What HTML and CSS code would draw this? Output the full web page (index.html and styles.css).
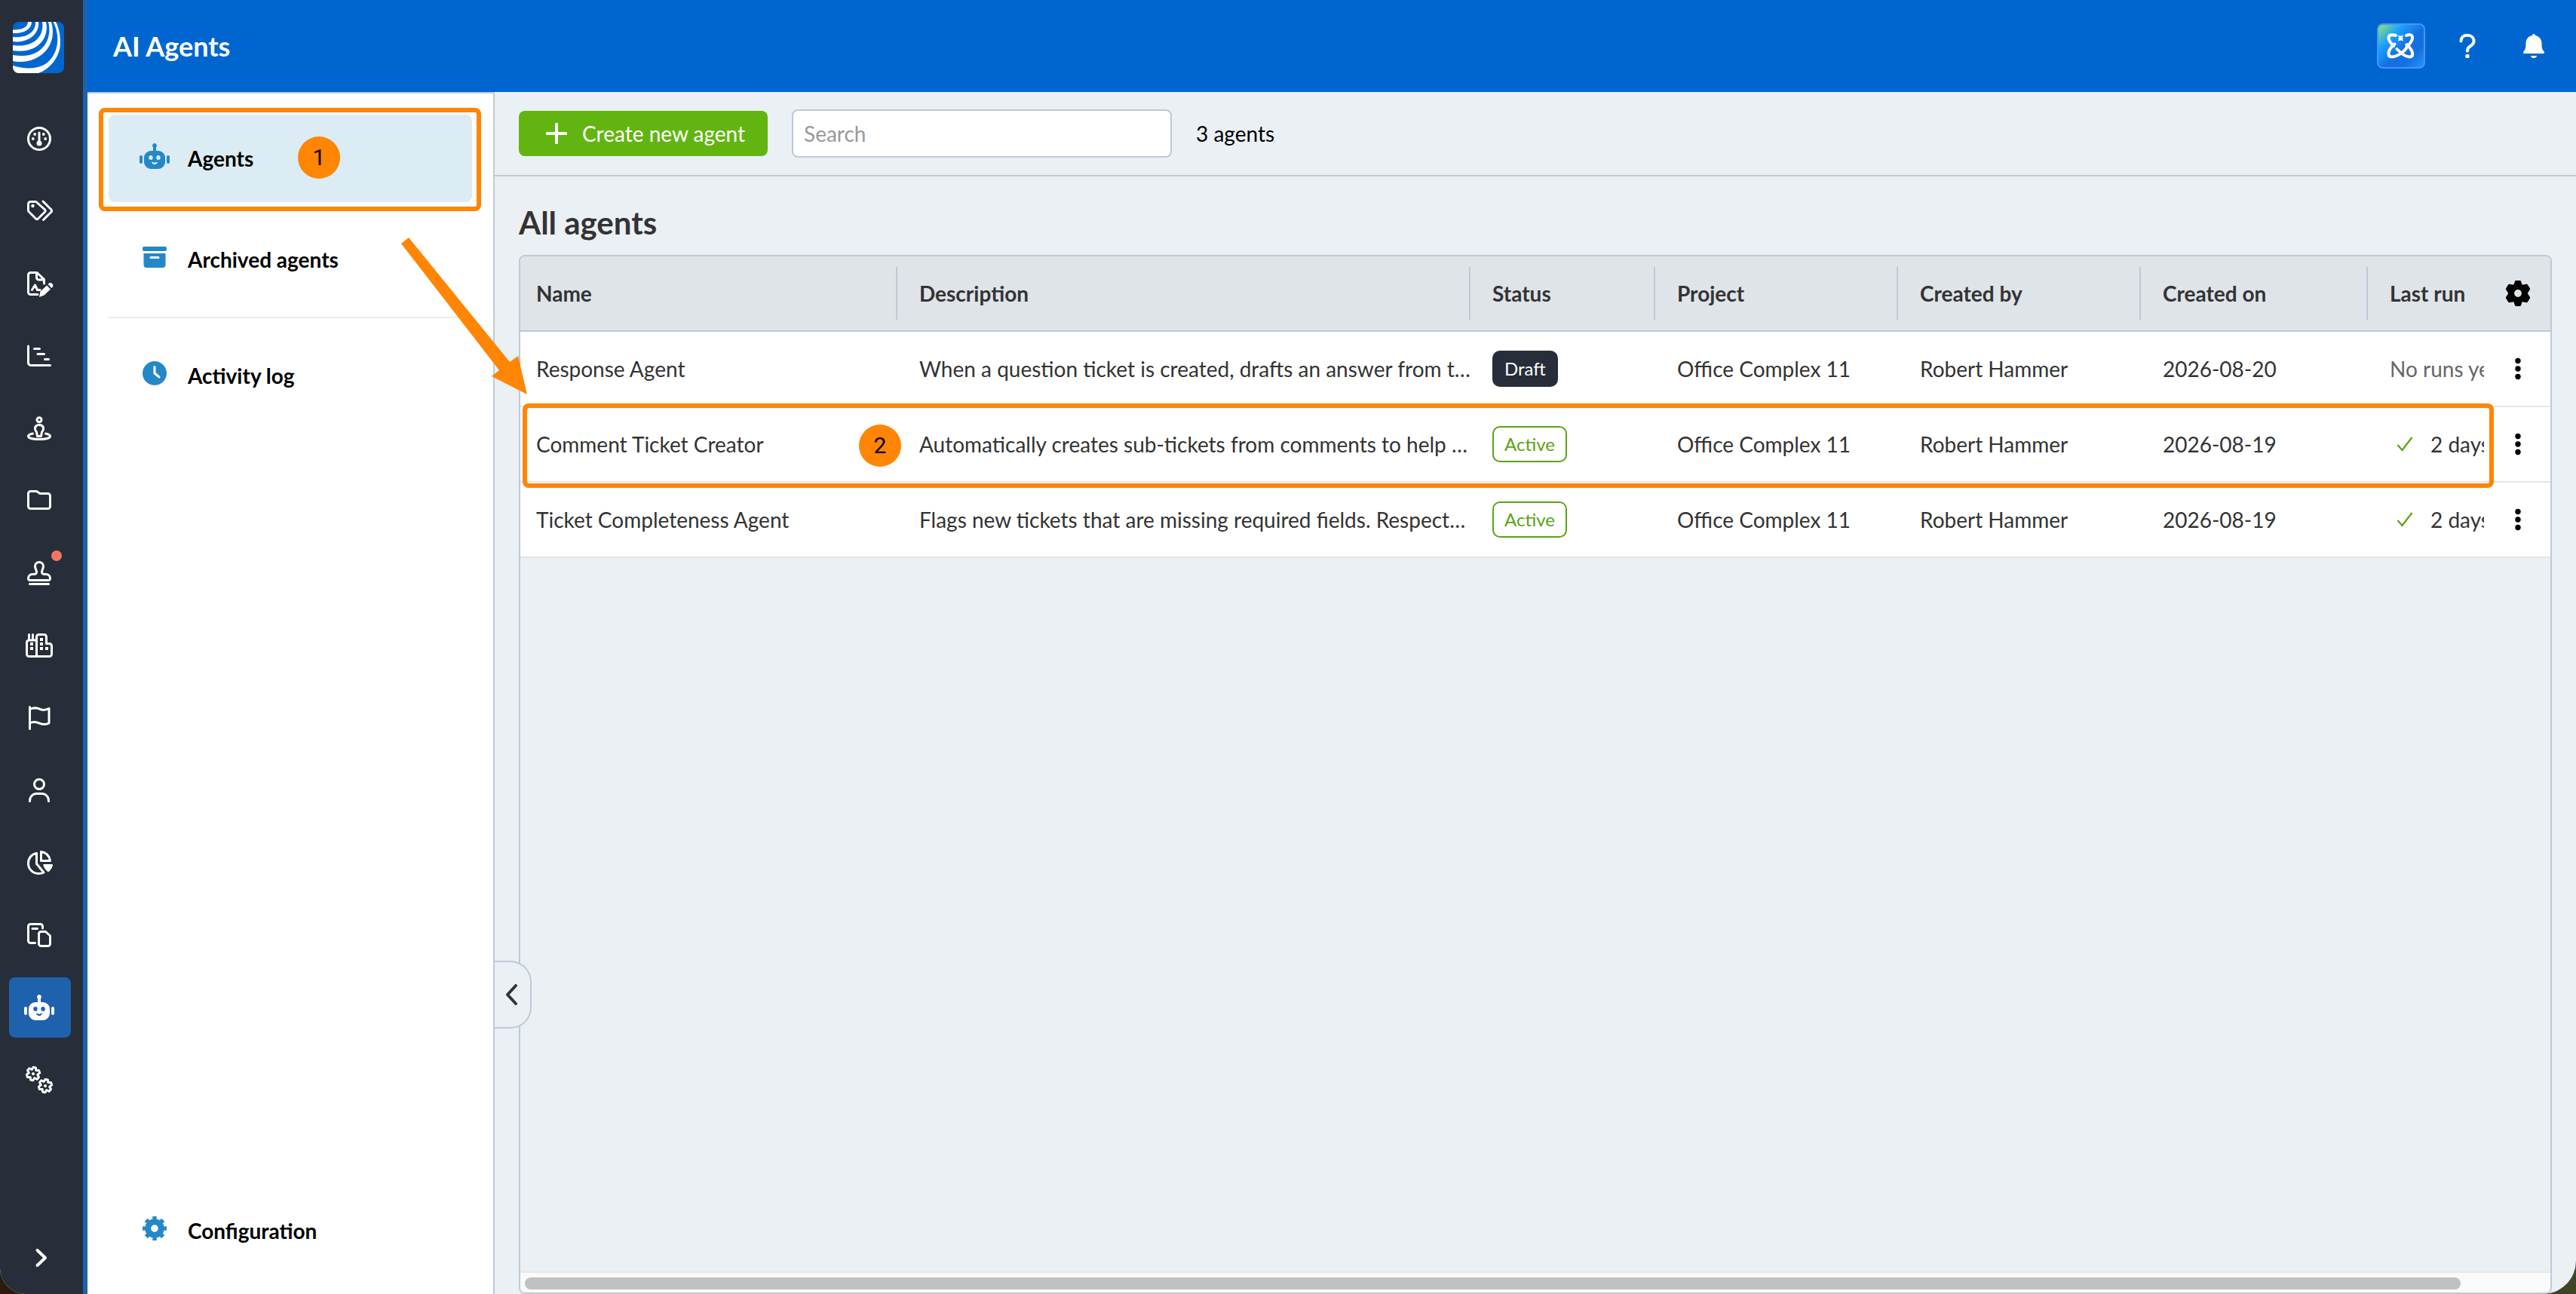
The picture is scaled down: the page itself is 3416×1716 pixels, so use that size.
FILE: index.html
```
<!DOCTYPE html>
<html lang="en">

<head>
    <meta charset="utf-8">
    <meta name="viewport" content="width=device-width, initial-scale=1.0">
    <title>AI Agents</title>

    <link rel="stylesheet" href="styles.css">
</head>

<body>
    <svg class="sprite" aria-hidden="true">
        <symbol id="robot" viewBox="0 0 48 48">
            <path fill="currentColor" fill-rule="evenodd" d="M24 7a3 3 0 0 1 2 5.200V17h3a9 9 0 0 1 9 9v6a9 9 0 0 1-9 9H19a9 9 0 0 1-9-9v-6a9 9 0 0 1 9-9h3v-4.800A3 3 0 0 1 24 7zM19 23a2.700 3 0 1 0 0 6 2.700 3 0 0 0 0-6zm10 0a2.700 3 0 1 0 0 6 2.700 3 0 0 0 0-6zm-8.500 8.500c-1 1.500 1 3.500 3.500 3.500s4.500-2 3.500-3.500c-2 1.500-5 1.500-7 0z" />
            <rect x="4" y="23" width="4" height="11" rx="2" fill="currentColor" />
            <rect x="40" y="23" width="4" height="11" rx="2" fill="currentColor" />
        </symbol>
        <symbol id="cog" viewBox="-8 -8 16 16" overflow="visible">
            <path d="M-1.700-8.500L1.700-8.500 2.800-5.200 6.500-6 8.300-2.900 5.800 0 8.300 2.900 6.500 6 2.800 5.200 1.700 8.500-1.700 8.500-2.800 5.200-6.500 6-8.300 2.900-5.800 0-8.300-2.900-6.500-6-2.800-5.200z" />
        </symbol>
        <symbol id="dots" viewBox="0 0 48 48">
            <circle cx="24" cy="13.500" r="3.700" />
            <circle cx="24" cy="24" r="3.700" />
            <circle cx="24" cy="34.500" r="3.700" />
        </symbol>
        <symbol id="check" viewBox="0 0 24 24">
            <path d="M2.500 13l6 7L21.500 3" fill="none" stroke="currentColor" stroke-width="2.200" />
        </symbol>
    </svg>

    <div class="app">
        <nav class="rail">
            <a href="#" class="logo" aria-label="Home">
                <svg viewBox="0 0 68 68">
                    <rect width="68" height="68" fill="#0066cf" />
                    <g fill="#fff">
                        <path d="M20 0C20 7 12 11 0 10.500V15C14 16 25 10 25 0z" />
                        <path d="M30 0C31 12 20 22 0 20V26C22 29 36 14 34 0z" />
                        <path d="M39 0C42 17 30 35 0 31V38C32 43 49 22 44 0z" />
                        <path d="M47 0C53 22 40 51 0 44V52C32 58 61 34 51 0z" />
                        <path d="M53.500 0C62 16 62 38 48 52 38 62 20 64 0 58V68H34C50 62 60 48 62.500 34 64 22 62 10 57 0z" />
                    </g>
                </svg>
            </a>

            <a href="#" aria-label="Dashboard">
                <svg viewBox="0 0 48 48"><circle cx="24" cy="24" r="14.500" /><path d="M24 16v12" /><g class="solid"><circle cx="24" cy="30" r="3.500" /><circle cx="15.800" cy="24" r="1.900" /><circle cx="32.200" cy="24" r="1.900" /><circle cx="18.200" cy="18" r="1.900" /><circle cx="29.800" cy="18" r="1.900" /></g></svg>
            </a>
            <a href="#" aria-label="Tickets">
                <svg viewBox="0 0 48 48"><path d="M12.500 11.500H19a3 3 0 0 1 2 1l10.500 9.500a2 2 0 0 1 0 3l-9 9a2 2 0 0 1-3 0l-9-9a3 3 0 0 1-1-2v-8.500a3 3 0 0 1 3-3z" /><path d="M29 11l11 11a2 2 0 0 1 0 3L29.500 35.500" /><circle class="solid" cx="15.400" cy="17" r="2.200" /></svg>
            </a>
            <a href="#" aria-label="Forms">
                <svg viewBox="0 0 48 48"><path d="M22 38.500h-9.500a3 3 0 0 1-3-3v-23a3 3 0 0 1 3-3H21l9.500 9V24M20.500 10v6a3 3 0 0 0 3 3h7M14.500 32.500l4-6.500 3 6.500H25" /><g class="solid"><path d="M24 42l1.500-7.500 8.500-8 5 5-8.500 8z" /><path d="M35.500 25l1.200-1.200a3.600 3.600 0 0 1 5 5L40.500 30z" /></g></svg>
            </a>
            <a href="#" aria-label="Schedule">
                <svg viewBox="0 0 48 48"><path d="M9.500 11v22a3.500 3.500 0 0 0 3.500 3.500h25.500M17.500 14.500h7M22 21.500h8.500M31.500 28.500h5" /></svg>
            </a>
            <a href="#" aria-label="Site view">
                <svg viewBox="0 0 48 48"><circle cx="24" cy="12.700" r="3" /><path d="M24 19.500c-3.500 0-5.500 2-5.500 5 0 2.500 1 3.500 2 4.500l1 5.500h5l1-5.500c1-1 2-2 2-4.500 0-3-2-5-5.500-5zM15.500 31C11 31.800 9.500 33 9.500 34.500 9.500 37 16 38.500 24 38.500S38.500 37 38.500 34.500C38.500 33 37 31.800 32.500 31" /></svg>
            </a>
            <a href="#" aria-label="Documents">
                <svg viewBox="0 0 48 48"><path d="M12.500 11.500h8l4.500 3h10.500a3 3 0 0 1 3 3v14a3 3 0 0 1-3 3h-23a3 3 0 0 1-3-3v-17a3 3 0 0 1 3-3z" /></svg>
            </a>
            <a href="#" aria-label="Approvals">
                <svg viewBox="0 0 48 48"><path d="M20.500 22.500c0-3-2-4-2-7.500a5.500 5.500 0 0 1 11 0c0 3.500-2 4.500-2 7.500 0 2 1.500 3 4 3H33a5.500 5.500 0 0 1 5.500 5.500c0 1.500-1 2.500-2.500 2.500H12c-1.500 0-2.500-1-2.500-2.500a5.500 5.500 0 0 1 5.500-5.500h1.500c2.500 0 4-1 4-3zM11.500 38.500h25" /></svg>
                <span class="alert"></span>
            </a>
            <a href="#" aria-label="Buildings">
                <svg viewBox="0 0 48 48"><path d="M20.500 17H10.500a3 3 0 0 0-3 3v15.500a3 3 0 0 0 3 3h27a3 3 0 0 0 3-3v-11a3 3 0 0 0-3-3h-4v-9a3 3 0 0 0-3-3h-7a3 3 0 0 0-3 3v26M10.500 17V9.500M15.500 17V9.500" /><g class="solid"><rect x="12" y="20" width="4" height="4" /><rect x="12" y="26" width="4" height="4" /><rect x="25" y="14" width="4" height="4" /><rect x="25" y="20" width="4" height="4" /><rect x="25" y="26" width="4" height="4" /><rect x="32" y="26" width="4" height="4" /></g></svg>
            </a>
            <a href="#" aria-label="Milestones">
                <svg viewBox="0 0 48 48"><path d="M11.500 9.500v29M11.500 12.500C17 10 21 10.500 25 12.300s8 1.300 12-.8V31c-4 2-8 2-12 .3S16 28.500 11.500 31" /></svg>
            </a>
            <a href="#" aria-label="People">
                <svg viewBox="0 0 48 48"><circle cx="24" cy="16" r="6.500" /><path d="M11.500 38.500c0-6.500 4.500-10 8.500-10h8c4 0 8.500 3.500 8.500 10" /></svg>
            </a>
            <a href="#" aria-label="Reports">
                <svg viewBox="0 0 48 48"><path d="M20.500 11.500V25.500L30 37C28 38 25.500 38.500 23 38.500 15.500 38.500 9.500 32.500 9.500 25 9.500 18 14 12.500 20.500 11.500zM26.500 9.500C33 10.500 37.500 15 38.500 21.500h-12z" /><path class="solid" d="M30 26h11c1 0 1 1 .8 2-.8 3-2.300 5.500-4.800 7.700-.7.600-1.300.600-2 0-2.500-2.200-4.500-4.700-5.500-7.700-.4-1 0-2 .500-2z" /></svg>
            </a>
            <a href="#" aria-label="Templates">
                <svg viewBox="0 0 48 48"><path d="M18.500 34.500h-6a3 3 0 0 1-3-3v-19a3 3 0 0 1 3-3h13a3 3 0 0 1 3 3V15M15 15.500h6.500M26.500 19.500h6l6 5.500v10.500a3 3 0 0 1-3 3h-9a3 3 0 0 1-3-3v-13a3 3 0 0 1 3-3z" /></svg>
            </a>
            <a href="#" class="current" aria-label="AI agents">
                <svg class="plain"><use href="#robot" /></svg>
            </a>
            <a href="#" aria-label="Settings">
                <svg viewBox="0 0 48 48"><g transform="translate(16 16) rotate(12)"><use href="#cog" x="-8" y="-8" width="16" height="16" /><circle class="solid" r="2" /></g><g transform="translate(32 32) rotate(12)"><use href="#cog" x="-8" y="-8" width="16" height="16" /><circle class="solid" r="2" /></g></svg>
            </a>

            <button class="expand" aria-label="Expand menu">
                <svg viewBox="0 0 24 32"><path d="M6.500 6L17 16 6.500 26" /></svg>
            </button>
        </nav>

        <div class="page">
            <header>
                <h1>AI Agents</h1>
                <div class="tools">
                    <button class="assistant" aria-label="Assistant">
                        <svg viewBox="0 0 48 48">
                            <path d="M17 10C12 8.500 7.500 9 7.500 13.500 7.500 17 11 21 14 24M15.500 21.500C10 26 7 31 7.500 35 8 40 15 38.500 19 36.500 24 34 28 31 31 27M18.500 28C23 33 30 38 35 38.500 40 38.500 40 34 38 30 36.500 27 34 24.500 32 22M31 10C36 8 39.500 9.500 39 14 38.500 17.500 36 20.500 33 24" />
                            <path class="solid" d="M20 9.500c2 1.200 5 1.200 7 0-1.200 2.500-1.200 5 0 8-2-1.500-5-1.500-7 0 1.200-3 1.200-5.500 0-8zM29 20.500c1.700 1.200 3.500 1.200 5.500 0-1 2-1 4 0 6-2-1.200-3.800-1.200-5.500 0 1-2 1-4 0-6z" />
                        </svg>
                    </button>
                    <button aria-label="Help">
                        <svg viewBox="0 0 48 48"><path d="M15.500 17.500c0-5 3.500-7.700 8.500-7.700s8.500 3.200 8.500 7.700c0 3.500-2 5-4.500 6.500s-4 3-4 6.500" /><circle class="solid" cx="24" cy="37.400" r="2.700" /></svg>
                    </button>
                    <button aria-label="Notifications">
                        <svg viewBox="0 0 48 48"><path class="solid" d="M24 8a2 2 0 0 1 2 2c5 1 8.500 5 8.500 10 0 6 .500 8.500 3.200 11.500 1 1.500 0 2.500-1.200 2.500h-25c-1.200 0-2.200-1-1.200-2.500C13 28.500 13.500 26 13.500 20c0-5 3.500-9 8.500-10a2 2 0 0 1 2-2zM20 37h8c0 4-8 4-8 0z" /></svg>
                    </button>
                </div>
            </header>

            <div class="body">
                <aside class="panel">
                    <a href="#" class="item chosen">
                        <svg><use href="#robot" /></svg>
                        <span>Agents</span>
                        <b class="step">1</b>
                    </a>
                    <a href="#" class="item">
                        <svg viewBox="0 0 48 48"><rect x="8" y="10" width="32" height="6" rx="2" fill="currentColor" /><path fill="currentColor" d="M9.500 19h29v15a4 4 0 0 1-4 4h-21a4 4 0 0 1-4-4z" /><path d="M19 24.500h10" stroke="#fff" stroke-width="3" stroke-linecap="round" /></svg>
                        <span>Archived agents</span>
                    </a>
                    <hr>
                    <a href="#" class="item">
                        <svg viewBox="0 0 48 48"><circle cx="24" cy="24" r="16" fill="currentColor" /><path d="M24 15.500V24l6 5" fill="none" stroke="#fff" stroke-width="3" stroke-linecap="round" /></svg>
                        <span>Activity log</span>
                    </a>
                    <a href="#" class="item bottom">
                        <svg viewBox="0 0 48 48" fill="none" stroke="currentColor"><circle cx="24" cy="24" r="8.800" stroke-width="8" /><circle cx="24" cy="24" r="13.500" stroke-width="5" pathLength="16" stroke-dasharray="1 1" stroke-dashoffset=".5" /></svg>
                        <span>Configuration</span>
                    </a>
                </aside>

                <main>
                    <div class="toolbar">
                        <button class="create">
                            <svg viewBox="0 0 28 28"><path d="M14 1.500v25M1.500 14h25" /></svg>
                            Create new agent
                        </button>
                        <input type="search" placeholder="Search" aria-label="Search agents">
                        <span>3 agents</span>
                    </div>

                    <h2>All agents</h2>

                    <div class="grid">
                        <table>
                            <colgroup>
                                <col class="c-name">
                                <col>
                                <col class="c-status">
                                <col class="c-who">
                                <col class="c-who">
                                <col class="c-date">
                                <col class="c-run">
                                <col class="c-menu">
                            </colgroup>
                            <thead>
                                <tr>
                                    <th>Name</th>
                                    <th>Description</th>
                                    <th>Status</th>
                                    <th>Project</th>
                                    <th>Created by</th>
                                    <th>Created on</th>
                                    <th>Last run</th>
                                    <th>
                                        <button class="more" aria-label="Table settings"><svg viewBox="-24 -24 48 48"><g transform="scale(2)"><path fill-rule="evenodd" stroke="#000" stroke-width="1.500" stroke-linejoin="round" d="M-1.300-7.700H1.300L2.300-4.800 5.800-5.400 7.300-2.900 5.500 0 7.300 2.900 5.800 5.400 2.300 4.800 1.300 7.700H-1.300L-2.300 4.800-5.800 5.400-7.300 2.900-5.500 0-7.300-2.900-5.800-5.400-2.300-4.800zM0-3.200A3.200 3.200 0 0 0 0 3.200 3.200 3.200 0 0 0 0-3.200z" /></g></svg></button>
                                    </th>
                                </tr>
                            </thead>
                            <tbody>
                                <tr>
                                    <td>Response Agent</td>
                                    <td>When a question ticket is created, drafts an answer from the docs</td>
                                    <td><span class="badge draft">Draft</span></td>
                                    <td>Office Complex 11</td>
                                    <td>Robert Hammer</td>
                                    <td>2026-08-20</td>
                                    <td><div class="run none">No runs yet</div></td>
                                    <td><button class="more" aria-label="Row menu"><svg><use href="#dots" /></svg></button></td>
                                </tr>
                                <tr class="marked">
                                    <td>Comment Ticket Creator<b class="step">2</b></td>
                                    <td>Automatically creates sub-tickets from comments to help teams</td>
                                    <td><span class="badge">Active</span></td>
                                    <td>Office Complex 11</td>
                                    <td>Robert Hammer</td>
                                    <td>2026-08-19</td>
                                    <td><div class="run"><svg><use href="#check" /></svg>2 days ago</div></td>
                                    <td><button class="more" aria-label="Row menu"><svg><use href="#dots" /></svg></button></td>
                                </tr>
                                <tr>
                                    <td>Ticket Completeness Agent</td>
                                    <td>Flags new tickets that are missing required fields. Respects drafts</td>
                                    <td><span class="badge">Active</span></td>
                                    <td>Office Complex 11</td>
                                    <td>Robert Hammer</td>
                                    <td>2026-08-19</td>
                                    <td><div class="run"><svg><use href="#check" /></svg>2 days ago</div></td>
                                    <td><button class="more" aria-label="Row menu"><svg><use href="#dots" /></svg></button></td>
                                </tr>
                            </tbody>
                        </table>
                        <div class="scroll"><div class="thumb"></div></div>
                    </div>

                    <button class="collapse" aria-label="Hide side panel">
                        <svg viewBox="0 0 24 32"><path d="M18 4L7 16l11 12" /></svg>
                    </button>
                </main>
            </div>
        </div>

        <svg class="arrow" viewBox="0 0 170 210">
            <path d="M2 9L12 1 146 166 157 158 169 209 122 185 132 177z" />
        </svg>
    </div>
</body>

</html>
```
FILE: styles.css
```
* {
    box-sizing: border-box;
}

body {
    margin: 0;
    font-family: Lato, "Liberation Sans", sans-serif;
    font-size: 28px;
    line-height: 34px;
    color: #333;
    background: linear-gradient(to right, #2b1a0e, #3f4526);
}

button,
input {
    font: inherit;
    color: inherit;
}

button {
    border: none;
    background: none;
    padding: 0;
    cursor: pointer;
}

a {
    text-decoration: none;
    color: inherit;
}

svg {
    display: block;
    flex: none;
    width: 48px;
    height: 48px;
}

.sprite {
    position: absolute;
    width: 0;
    height: 0;
}

.app {
    position: relative;
    display: flex;
    min-height: 100vh;
    border-radius: 0 0 44px 34px;
    overflow: hidden;
    background: #ebf0f5;
}

/* dark icon rail */

.rail {
    display: flex;
    flex-direction: column;
    gap: 16px;
    width: 116px;
    padding: 29px 0 24px 12px;
    background: #272e39;
    border-right: 6px solid #1e62ae;
}

.rail a {
    position: relative;
    display: flex;
    align-items: center;
    justify-content: center;
    width: 82px;
    height: 80px;
    padding-right: 2px;
    border-radius: 8px;
}

.rail .logo {
    width: 68px;
    height: 68px;
    margin: 0 0 31px 5px;
    padding: 0;
    overflow: hidden;
}

.logo svg {
    width: 68px;
    height: 68px;
}

.rail a:not(.logo) svg:not(.plain),
.expand svg,
.tools svg {
    fill: none;
    stroke: #fff;
    stroke-width: 3;
    stroke-linecap: round;
    stroke-linejoin: round;
}

svg .solid {
    fill: #fff;
    stroke: none;
}

.rail .current {
    background: #1e62ae;
    color: #fff;
}

.alert {
    position: absolute;
    top: 10px;
    right: 12px;
    width: 14px;
    height: 14px;
    border-radius: 50%;
    background: #f47564;
}

.expand {
    display: flex;
    justify-content: center;
    width: 86px;
    margin-top: auto;
    padding: 8px 0;
}

.expand svg {
    width: 24px;
    height: 32px;
    stroke-width: 4;
}

.page {
    display: flex;
    flex-direction: column;
    flex: 1;
    min-width: 0;
}

header {
    display: flex;
    align-items: center;
    justify-content: space-between;
    height: 122px;
    padding: 0 24px 0 34px;
    background: #0066cf;
    color: #fff;
}

h1 {
    margin: 0;
    font-size: 36px;
    line-height: 44px;
}

.tools {
    display: flex;
    gap: 24px;
}

.tools button {
    display: flex;
    align-items: center;
    justify-content: center;
    width: 64px;
    height: 60px;
    border-radius: 8px;
}

.tools svg {
    stroke-width: 4;
}

.tools .assistant {
    border: 2px solid #4595fc;
    background: linear-gradient(135deg, #9be36b 0%, #1aa3ff 28%, #1470e0 55%, #1470e0 75%, #2196f8 100%);
}

.body {
    display: flex;
    flex: 1;
}

/* side panel */

.panel {
    display: flex;
    flex-direction: column;
    width: 540px;
    padding: 28px 28px 26px;
    background: #fff;
    border-top: 2px solid #bec9d6;
    border-right: 2px solid #bec9d6;
    font-weight: bold;
    color: #000;
}

.item {
    position: relative;
    display: flex;
    align-items: center;
    gap: 20px;
    height: 116px;
    margin-bottom: 18px;
    padding-left: 37px;
    border-radius: 8px;
}

.item svg {
    margin-bottom: 6px;
    color: #2488c8;
}

.item.chosen {
    background: #dcecf5;
}

.item.bottom {
    margin-top: auto;
    margin-bottom: 0;
}

.panel hr {
    width: 100%;
    margin: 0 0 18px;
    border: none;
    border-top: 2px solid #ececec;
}

main {
    position: relative;
    display: flex;
    flex-direction: column;
    flex: 1;
    min-width: 0;
}

.toolbar {
    display: flex;
    align-items: center;
    gap: 32px;
    height: 112px;
    padding: 0 32px;
    border-bottom: 2px solid #bec9d6;
    color: #000;
}

.create {
    display: flex;
    align-items: center;
    gap: 20px;
    height: 60px;
    padding: 0 30px 0 36px;
    border-radius: 8px;
    background: #62b510;
    color: #fff;
}

.create svg {
    width: 28px;
    height: 28px;
    stroke: #fff;
    stroke-width: 4;
    stroke-linecap: round;
}

.toolbar input {
    width: 504px;
    height: 64px;
    padding: 0 14px;
    border: 2px solid #bec9d6;
    border-radius: 8px;
    background: #fff;
}

.toolbar input::placeholder {
    color: #999;
}

h2 {
    margin: 35px 32px 17px;
    font-size: 42px;
    line-height: 52px;
}

/* agents table */

.grid {
    display: flex;
    flex-direction: column;
    flex: 1;
    margin: 0 32px;
    border: 2px solid #bec9d6;
    border-radius: 8px;
    overflow: hidden;
}

table {
    width: 100%;
    table-layout: fixed;
    border-collapse: separate;
    border-spacing: 0;
}

.c-name {
    width: 500px;
}

.c-status {
    width: 245px;
}

.c-who {
    width: 322px;
}

.c-date {
    width: 301px;
}

.c-run {
    width: 154px;
}

.c-menu {
    width: 88px;
}

th,
td {
    height: 100px;
    padding: 0 0 0 29px;
    text-align: left;
    white-space: nowrap;
    overflow: hidden;
    text-overflow: ellipsis;
}

th {
    position: relative;
    background: #dfe4e9;
    border-bottom: 2px solid #bec9d6;
}

th::after {
    content: "";
    position: absolute;
    top: 14px;
    right: 0;
    width: 2px;
    height: 70px;
    background: #bec9d6;
}

th:nth-last-child(-n+2)::after {
    display: none;
}

td {
    background: #fff;
    border-bottom: 2px solid #e4e5e7;
}

th:first-child,
td:first-child,
th:last-child,
td:last-child {
    padding-left: 21px;
}

.badge {
    display: inline-block;
    height: 48px;
    padding: 0 14px;
    border: 2px solid #5aa312;
    border-radius: 10px;
    font-size: 24px;
    line-height: 44px;
    color: #5aa312;
    background: #fff;
}

.badge.draft {
    border-color: #272e39;
    background: #272e39;
    color: #fff;
}

.run {
    display: flex;
    align-items: center;
    gap: 22px;
    padding-left: 8px;
    overflow: hidden;
}

.run.none {
    padding-left: 0;
    color: #666;
}

.run svg {
    width: 24px;
    height: 24px;
    color: #5aa312;
}

.more {
    display: block;
}

.scroll {
    margin-top: auto;
    padding: 6px 6px 4px;
    border-top: 2px solid #e8e8e8;
    background: #fafafa;
}

.thumb {
    width: 95.8%;
    height: 16px;
    border-radius: 8px;
    background: #c1c1c1;
}

.collapse {
    position: absolute;
    top: 1152px;
    left: 0;
    width: 49px;
    height: 90px;
    padding-left: 10px;
    border: 2px solid #bec9d6;
    border-left: none;
    border-radius: 0 28px 28px 0;
    background: #ebf0f5;
}

.collapse svg {
    width: 24px;
    height: 32px;
    fill: none;
    stroke: #333;
    stroke-width: 4;
    stroke-linecap: round;
    stroke-linejoin: round;
}

/* orange walkthrough marks */

.step {
    display: flex;
    align-items: center;
    justify-content: center;
    position: absolute;
    width: 56px;
    height: 56px;
    border-radius: 50%;
    background: #ff8503;
    color: #000;
    font-family: Roboto, sans-serif;
    font-size: 30px;
    font-weight: normal;
}

.chosen .step {
    top: 29px;
    left: 251px;
}

.marked .step {
    top: 23px;
    left: 449px;
}

.chosen::after,
.marked td:first-child::after {
    content: "";
    position: absolute;
    border: 6px solid #ff8503;
    border-radius: 8px;
    pointer-events: none;
}

.chosen::after {
    inset: -9px -12px -12px -13px;
}

.marked {
    position: relative;
}

.marked td:first-child::after {
    inset: -5px 75px -7px 3px;
}

.arrow {
    position: absolute;
    top: 314px;
    left: 530px;
    width: 170px;
    height: 210px;
    fill: #ff8503;
}
```
